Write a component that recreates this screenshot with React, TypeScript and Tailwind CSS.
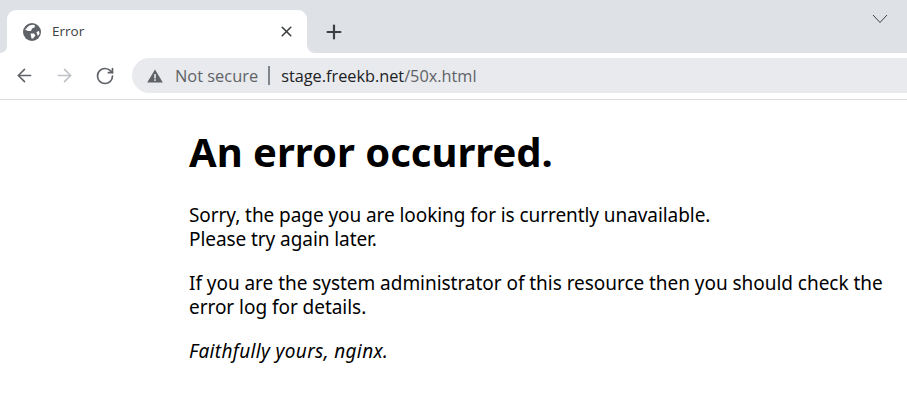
import React from 'react';
import { X, Plus, ArrowLeft, ArrowRight, RotateCw } from 'lucide-react';

const uiFont = "font-['Open_Sans','Noto_Sans',sans-serif]";

export default function App() {
  return (
    <div className="w-[907px] h-[405px] bg-white overflow-hidden">
      {/* Tab strip */}
      <div className="h-[53px] bg-[#dee1e6] flex items-end pl-[7px] pr-[18px]">
        <div className="relative w-[300px] h-[43px] bg-white rounded-t-[9px] flex items-center pl-[16px] pr-[13px]">
          {/* flared tab corners */}
          <span className="absolute -left-[7px] bottom-0 w-[7px] h-[7px] bg-white">
            <span className="block w-full h-full bg-[#dee1e6] rounded-br-[7px]" />
          </span>
          <span className="absolute -right-[8px] bottom-0 w-[8px] h-[8px] bg-white">
            <span className="block w-full h-full bg-[#dee1e6] rounded-bl-[8px]" />
          </span>
          <svg width="18" height="18" viewBox="0 0 18 18" className="shrink-0">
            <circle cx="9" cy="9" r="9" fill="#5f6368" />
            <path d="M2 6.5 C4 5 5 3.5 6.5 2.5 C9 1.5 11 1.5 12 2.5 L11.5 4.5 L9 5.5 L8 8 L5 8 Z" fill="#fff" />
            <path d="M7.5 10.5 L11 10.5 L12.5 12.5 L10 15.5 L8.5 15.5 L8 13 Z" fill="#fff" />
            <path d="M13.5 9 L16 8 L16.5 10.5 L15 13 L14 11 Z" fill="#fff" />
          </svg>
          <span className={`${uiFont} ml-[11px] text-[13.5px] text-[#3c4043] flex-1`}>Error</span>
          <X size={17} strokeWidth={2.3} className="text-[#3c4043] -mr-[1px]" />
        </div>
        <div className="h-[43px] flex items-center ml-[16px]">
          <Plus size={22} strokeWidth={2.4} className="text-[#3c4043]" />
        </div>
        <div className="h-[53px] ml-auto pt-[14px]">
          <svg width="16" height="10" viewBox="0 0 16 10" className="mr-[1px]">
            <path d="M1 1 L8 8.5 L15 1" fill="none" stroke="#3c4043" strokeWidth="1" />
          </svg>
        </div>
      </div>
      {/* Toolbar */}
      <div className="h-[47px] bg-white border-b border-[#dadce0] flex items-start pt-[5px] pl-[14px]">
        <div className="h-[35px] flex items-center gap-[20px]">
          <ArrowLeft size={21} strokeWidth={1.8} className="text-[#5f6368]" />
          <ArrowRight size={21} strokeWidth={1.8} className="text-[#bdc1c6] -ml-[1px]" />
          <RotateCw size={20} strokeWidth={2} className="text-[#5f6368]" />
        </div>
        <div className="ml-[17px] flex-1 h-[35px] bg-[#e8eaed] rounded-l-full flex items-center pl-[15px]">
          <svg width="16" height="14" viewBox="0 0 16 14" className="shrink-0">
            <path d="M8 0.5 L15.8 13.5 L0.2 13.5 Z" fill="#5f6368" />
            <rect x="7.2" y="5" width="1.6" height="4.5" fill="#e8eaed" />
            <rect x="7.2" y="10.3" width="1.6" height="1.6" fill="#e8eaed" />
          </svg>
          <span className={`${uiFont} ml-[12px] text-[16.4px] leading-[24px] pt-[1px] text-[#5f6368]`}>Not secure</span>
          <span className="ml-[10px] w-[2px] h-[19px] bg-[#80868b]" />
          <span className={`${uiFont} ml-[11px] text-[16.3px] leading-[24px] pt-[1px] text-[#202124]`}>
            stage.freekb.net<span className="text-[#5f6368]">/50x.html</span>
          </span>
        </div>
      </div>
      {/* Page */}
      <div className="ml-[189px] w-[700px] text-[19px] leading-[24px] tracking-[-0.07px] text-black font-['Noto_Sans',sans-serif]">
        <h1 className="text-[40px] leading-[47px] tracking-normal font-bold mt-[28px] mb-[28px]">An error occurred.</h1>
        <p className="mb-[20px]">
          Sorry, the page you are looking for is currently unavailable.
          <br />
          Please try again later.
        </p>
        <p className="mb-[20px] tracking-[-0.04px]">
          If you are the system administrator of this resource then you should check the error log for details.
        </p>
        <p className="italic tracking-[0.35px]">Faithfully yours, nginx.</p>
      </div>
    </div>
  );
}
